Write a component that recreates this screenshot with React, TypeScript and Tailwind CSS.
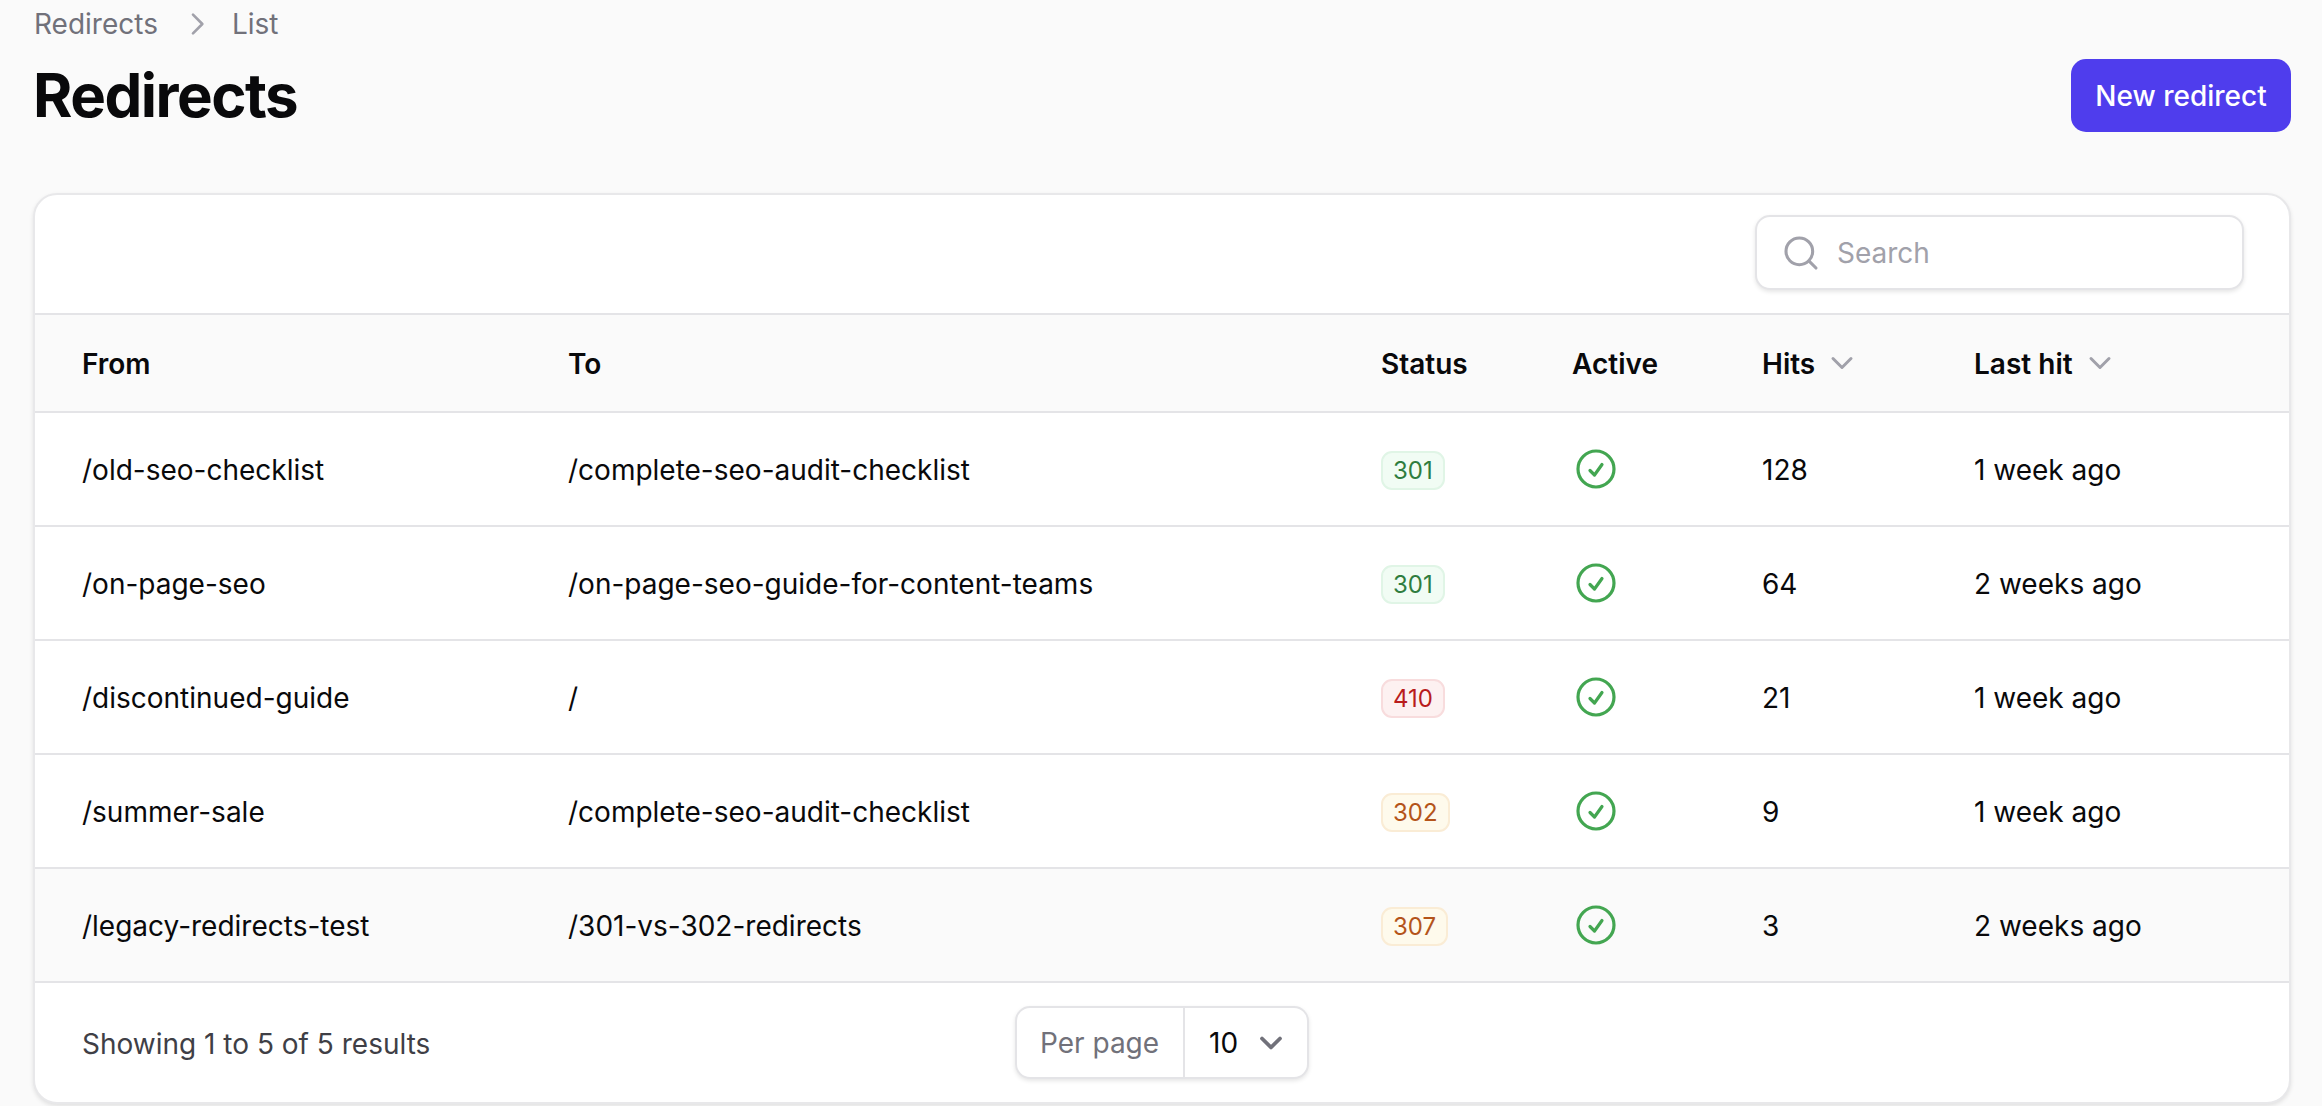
import React from "react";

const rows = [
  { from: "/old-seo-checklist", to: "/complete-seo-audit-checklist", status: "301", tone: "green", hits: "128", last: "1 week ago" },
  { from: "/on-page-seo", to: "/on-page-seo-guide-for-content-teams", status: "301", tone: "green", hits: "64", last: "2 weeks ago" },
  { from: "/discontinued-guide", to: "/", status: "410", tone: "red", hits: "21", last: "1 week ago" },
  { from: "/summer-sale", to: "/complete-seo-audit-checklist", status: "302", tone: "amber", hits: "9", last: "1 week ago" },
  { from: "/legacy-redirects-test", to: "/301-vs-302-redirects", status: "307", tone: "amber", hits: "3", last: "2 weeks ago" },
];

const tones: Record<string, string> = {
  green: "bg-[#f1fcf4] border-[#e0f5e6] text-[#2f7d3f]",
  red: "bg-[#fdf1f1] border-[#f8dcdd] text-[#b91c1c]",
  amber: "bg-[#fefaec] border-[#faecd5] text-[#b4541a]",
};

const cols = "grid grid-cols-[486px_813px_191px_190px_212px_1fr] items-center pl-[47px]";

function Chevron({ className, width = 2 }: { className: string; width?: number }) {
  return (
    <svg viewBox="0 0 24 24" fill="none" stroke="currentColor" strokeWidth={width} strokeLinecap="round" strokeLinejoin="round" className={className}>
      <path d="m6 9 6 6 6-6" />
    </svg>
  );
}

export default function App() {
  return (
    <div className="h-[1106px] overflow-hidden bg-[#fafafa] pr-[31px] pl-[33px] font-['Inter',sans-serif] text-[#09090b]">
      <div className="flex h-[193px] items-start justify-between">
        <div>
          <nav className="flex h-[48px] items-center pl-[1px] text-[28px] text-[#71717a]">
            <span>Redirects</span>
            <svg viewBox="0 0 24 24" fill="none" stroke="#a1a1aa" strokeWidth={2} strokeLinecap="round" strokeLinejoin="round" className="mr-[19px] ml-[23px] h-[32px] w-[32px]">
              <path d="m9 5 7 7-7 7" />
            </svg>
            <span>List</span>
          </nav>
          <h1 className="mt-[2px] text-[60px] leading-[90px] font-bold tracking-[-0.025em]">Redirects</h1>
        </div>
        <button className="mt-[59px] h-[73px] w-[220px] rounded-[15px] bg-[#4f3ded] text-[28px] font-medium text-white">New redirect</button>
      </div>

      <div className="h-[911px] overflow-hidden rounded-[24px] border-2 border-[#e8e8ea] bg-white shadow-[0_2px_4px_rgba(0,0,0,0.1)]">
        <div className="flex h-[118px] items-start justify-end pt-[20px] pr-[45px]">
          <div className="flex h-[75px] w-[489px] items-center gap-[16px] rounded-[15px] border-2 border-[#e4e4e7] bg-white pl-[24px] shadow-[0_2px_4px_rgba(0,0,0,0.1)]">
            <svg viewBox="0 0 24 24" fill="none" stroke="#a1a1aa" strokeWidth={1.85} strokeLinecap="round" strokeLinejoin="round" className="h-[40px] w-[40px]">
              <path d="m21 21-4.3-4.3" />
              <circle cx="11" cy="11" r="8" />
            </svg>
            <span className="text-[28px] text-[#a1a1aa]">Search</span>
          </div>
        </div>

        <div className={`${cols} h-[100px] border-y-2 border-[#e4e4e7] bg-[#fafafa] text-[28px] font-semibold`}>
          <span className="pt-[2px]">From</span>
          <span className="pt-[2px]">To</span>
          <span className="pt-[2px]">Status</span>
          <span className="pt-[2px]">Active</span>
          <span className="flex items-center gap-[9px]">
            <span className="pt-[2px]">Hits</span>
            <Chevron className="h-[36px] w-[36px] text-[#a1a1aa]" />
          </span>
          <span className="flex items-center gap-[9px]">
            <span className="pt-[2px]">Last hit</span>
            <Chevron className="h-[36px] w-[36px] text-[#a1a1aa]" />
          </span>
        </div>

        {rows.map((r, i) => (
          <div
            key={i}
            className={`${cols} h-[114px] border-b-2 border-[#e4e4e7] text-[28px] ${i === 4 ? "bg-[#fafafa]" : ""}`}
          >
            <span className="pt-[2px]">{r.from}</span>
            <span className="pt-[2px]">{r.to}</span>
            <span>
              <span className={`inline-flex h-[39px] items-center rounded-[11px] border-2 px-[10px] text-[24px] ${tones[r.tone]}`}>{r.status}</span>
            </span>
            <svg viewBox="0 0 24 24" fill="none" stroke="#43a651" strokeWidth={1.6} strokeLinecap="round" strokeLinejoin="round" className="h-[48px] w-[48px]">
              <path d="M9 12.75 11.25 15 15 9.75M21 12a9 9 0 1 1-18 0 9 9 0 0 1 18 0Z" />
            </svg>
            <span className="pt-[2px]">{r.hits}</span>
            <span className="pt-[2px]">{r.last}</span>
          </div>
        ))}

        <div className="grid h-[119px] grid-cols-[1fr_auto_1fr] items-center">
          <span className="pt-[2px] pl-[47px] text-[28px] text-[#3f3f46]">Showing 1 to 5 of 5 results</span>
          <div className="flex h-[73px] w-[294px] items-center rounded-[15px] border-2 border-[#e4e4e7] bg-white shadow-[0_2px_4px_rgba(0,0,0,0.1)]">
            <span className="flex h-full w-[168px] items-center border-r-2 border-[#e4e4e7] pl-[23px] text-[28px] text-[#71717a]">Per page</span>
            <span className="pl-[24px] text-[28px]">10</span>
            <Chevron width={2.5} className="ml-[15px] h-[36px] w-[36px] text-[#71717a]" />
          </div>
          <span />
        </div>
      </div>
    </div>
  );
}
